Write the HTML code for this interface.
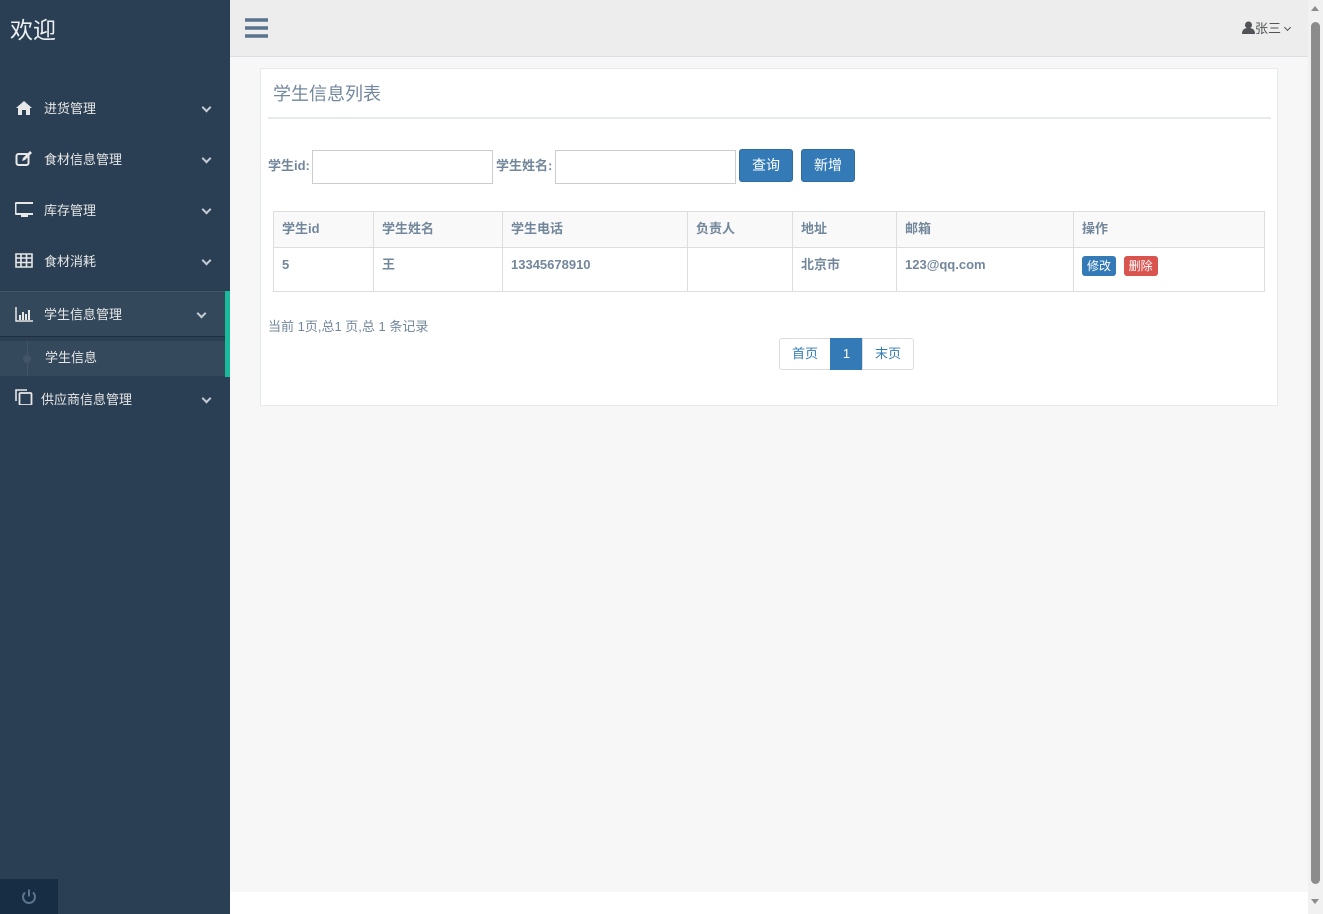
<!DOCTYPE html>
<html><head><meta charset="utf-8"><style>
*{box-sizing:border-box;margin:0;padding:0}
body{width:1323px;height:914px;overflow:hidden;font-family:"Liberation Sans","Noto Sans CJK SC",sans-serif;font-size:13px;line-height:16px;color:#73879C;background:#fff;position:relative}
.side{position:absolute;left:0;top:0;width:230px;height:914px;background:#2A3F54;color:#E7E7E7}
.logo{position:absolute;left:10px;top:16px;font-size:23px;line-height:28px;color:#ECF0F1}
.mi{position:absolute;left:0;width:230px;height:46px;font-size:13px;color:#E7E7E7}
.mi .ic{position:absolute;left:15px;top:14px;width:18px;height:16px}
.mi .t{position:absolute;left:44px;top:15px}
.mi .ch{position:absolute;right:20px;top:18px;width:7px;height:7px;border-right:2px solid #c5ccd3;border-bottom:2px solid #c5ccd3;transform:rotate(45deg)}
.act{background:#34485C;border-top:1px solid #425668;border-bottom:1px solid #1f2f3f}
.sub{position:absolute;left:0;top:341px;width:225px;height:35px;background:#35495D}
.green{position:absolute;left:225px;top:291px;width:5px;height:86px;background:#1ABB9C}
.pw{position:absolute;left:0;top:879px;width:58px;height:35px;background:#172D44}
.top{position:absolute;left:230px;top:0;width:1078px;height:57px;background:#EDEDED;border-bottom:1px solid #D9DEE4}
.main{position:absolute;left:230px;top:57px;width:1078px;height:835px;background:#F7F7F7}
.panel{position:absolute;left:260px;top:68px;width:1018px;height:338px;background:#fff;border:1px solid #E6E9ED}
.abs{position:absolute}
input{position:absolute;height:34px;border:1px solid #ccc;background:#fff}
.btn{position:absolute;height:33px;background:#337AB7;border:1px solid #2E6DA4;border-radius:3px;color:#fff;font-size:14px;text-align:center;line-height:31px}
table{position:absolute;left:273px;top:211px;width:992px;border-collapse:collapse;font-size:13px;font-weight:bold}
td,th{border:1px solid #DDD;text-align:left;padding:0 8px;vertical-align:top}
th{height:36px;background:#F9F9F9;padding-top:9px}
td{height:44px;padding-top:9px}
.sb{position:absolute;left:1308px;top:0;width:15px;height:914px;background:#F1F1F1}
.pg{position:absolute;top:338px;height:32px;border:1px solid #ddd;text-align:center;line-height:30px;color:#337AB7;background:#fff}
</style></head><body>
<div class="side">
<div class="logo">欢迎</div>
<div class="mi" style="top:86px"><svg class="ic" viewBox="0 0 18 16"><path d="M9 1L1 8h2v7h4v-5h4v5h4V8h2z" fill="#E7E7E7"/></svg><span class="t">进货管理</span><span class="ch"></span></div>
<div class="mi" style="top:137px"><svg class="ic" viewBox="0 0 18 16"><rect x="1.5" y="3" width="12" height="11" rx="2" fill="none" stroke="#E7E7E7" stroke-width="2"/><path d="M7 10l1-3 7-7 2 2-7 7z" fill="#E7E7E7"/></svg><span class="t">食材信息管理</span><span class="ch"></span></div>
<div class="mi" style="top:188px"><svg class="ic" viewBox="0 0 18 16"><rect x="0.5" y="1" width="19" height="11" rx="1" fill="none" stroke="#E7E7E7" stroke-width="2"/><rect x="6" y="12" width="7" height="3" fill="#E7E7E7"/></svg><span class="t">库存管理</span><span class="ch"></span></div>
<div class="mi" style="top:239px"><svg class="ic" viewBox="0 0 18 16"><path d="M1 1h16v13H1zM1 5h16M1 9.5h16M6 1v13M11.5 1v13" fill="none" stroke="#E7E7E7" stroke-width="1.6"/></svg><span class="t">食材消耗</span><span class="ch"></span></div>
<div class="mi act" style="top:291px"><svg class="ic" viewBox="0 0 18 16"><path d="M1 1v14h17" fill="none" stroke="#E7E7E7" stroke-width="1.5"/><path d="M4 9h2v5H4zM7 6h2v8H7zM10 8h2v6h-2zM13 4h2v10h-2z" fill="#E7E7E7"/></svg><span class="t">学生信息管理</span><span class="ch" style="right:25px"></span></div>
<div class="sub"><div class="abs" style="left:27px;top:0;width:1px;height:35px;background:#425668"></div><div class="abs" style="left:23px;top:14px;width:8px;height:8px;border-radius:50%;background:#425668"></div><span class="abs" style="left:45px;top:9px;color:#E7E7E7">学生信息</span></div>
<div class="green"></div>
<div class="mi" style="top:377px"><svg class="ic" viewBox="0 0 18 16" style="top:12px"><path d="M1 12V1h11" fill="none" stroke="#E7E7E7" stroke-width="1.6"/><rect x="4.5" y="4" width="12" height="12" rx="1" fill="none" stroke="#E7E7E7" stroke-width="1.8"/></svg><span class="t" style="left:41px">供应商信息管理</span><span class="ch"></span></div>
<div class="pw"><svg class="abs" style="left:20px;top:9px" width="18" height="18" viewBox="0 0 18 18"><path d="M5 4.5A6 6 0 1 0 13 4.5" fill="none" stroke="#5A738E" stroke-width="2"/><path d="M9 1.5v7" stroke="#5A738E" stroke-width="2"/></svg></div>
</div>
<div class="top">
<svg class="abs" style="left:15px;top:18px" width="23" height="20" viewBox="0 0 23 20"><path d="M0 2h23M0 10h23M0 18h23" stroke="#5A738E" stroke-width="3.5"/></svg>
<div class="abs" style="left:1012px;top:21px;color:#515356;font-size:13px"><svg width="13" height="13" viewBox="0 0 13 13" style="vertical-align:-1px"><circle cx="6.5" cy="4" r="3.5" fill="#515356"/><path d="M0 13c0-5 3-6 6.5-6s6.5 1 6.5 6z" fill="#515356"/></svg>张三 <span style="display:inline-block;width:5px;height:5px;border-right:1px solid #515356;border-bottom:1px solid #515356;transform:rotate(45deg);vertical-align:3px"></span></div>
</div>
<div class="main"></div>
<div class="panel">
<div class="abs" style="left:12px;top:14px;font-size:18px;line-height:22px">学生信息列表</div>
<div class="abs" style="left:7px;top:48px;width:1003px;height:2px;background:#E6E9ED"></div>
</div>
<span class="abs" style="left:268px;top:158px;font-weight:bold">学生id:</span>
<input style="left:312px;top:150px;width:181px">
<span class="abs" style="left:496px;top:158px;font-weight:bold">学生姓名:</span>
<input style="left:555px;top:150px;width:181px">
<div class="btn" style="left:739px;top:149px;width:54px">查询</div>
<div class="btn" style="left:801px;top:149px;width:54px">新增</div>
<table>
<tr><th style="width:100px">学生id</th><th style="width:129px">学生姓名</th><th style="width:185px">学生电话</th><th style="width:105px">负责人</th><th style="width:104px">地址</th><th style="width:177px">邮箱</th><th>操作</th></tr>
<tr><td>5</td><td>王</td><td>13345678910</td><td></td><td>北京市</td><td>123@qq.com</td><td style="padding-top:8px"><span style="display:inline-block;background:#337AB7;color:#fff;border-radius:3px;padding:2px 5px;font-size:12px;font-weight:normal">修改</span> <span style="display:inline-block;background:#D9534F;color:#fff;border-radius:3px;padding:2px 5px;font-size:12px;font-weight:normal;margin-left:4px">删除</span></td></tr>
</table>
<span class="abs" style="left:268px;top:319px">当前 1页,总1 页,总 1 条记录</span>
<div class="pg" style="left:779px;width:52px;border-radius:3px 0 0 3px">首页</div>
<div class="pg" style="left:830px;width:33px;background:#337AB7;color:#fff;border-color:#337AB7">1</div>
<div class="pg" style="left:862px;width:52px;border-radius:0 3px 3px 0">末页</div>
<div class="sb"><div class="abs" style="left:3px;top:22px;width:9px;height:862px;background:#8C8C8C;border-radius:5px"></div>
<div class="abs" style="left:3px;top:6px;border:4px solid transparent;border-bottom:5px solid #8c8c8c;border-top:0"></div>
<div class="abs" style="left:3px;top:899px;border:4px solid transparent;border-top:5px solid #8c8c8c;border-bottom:0"></div></div>
</body></html>
